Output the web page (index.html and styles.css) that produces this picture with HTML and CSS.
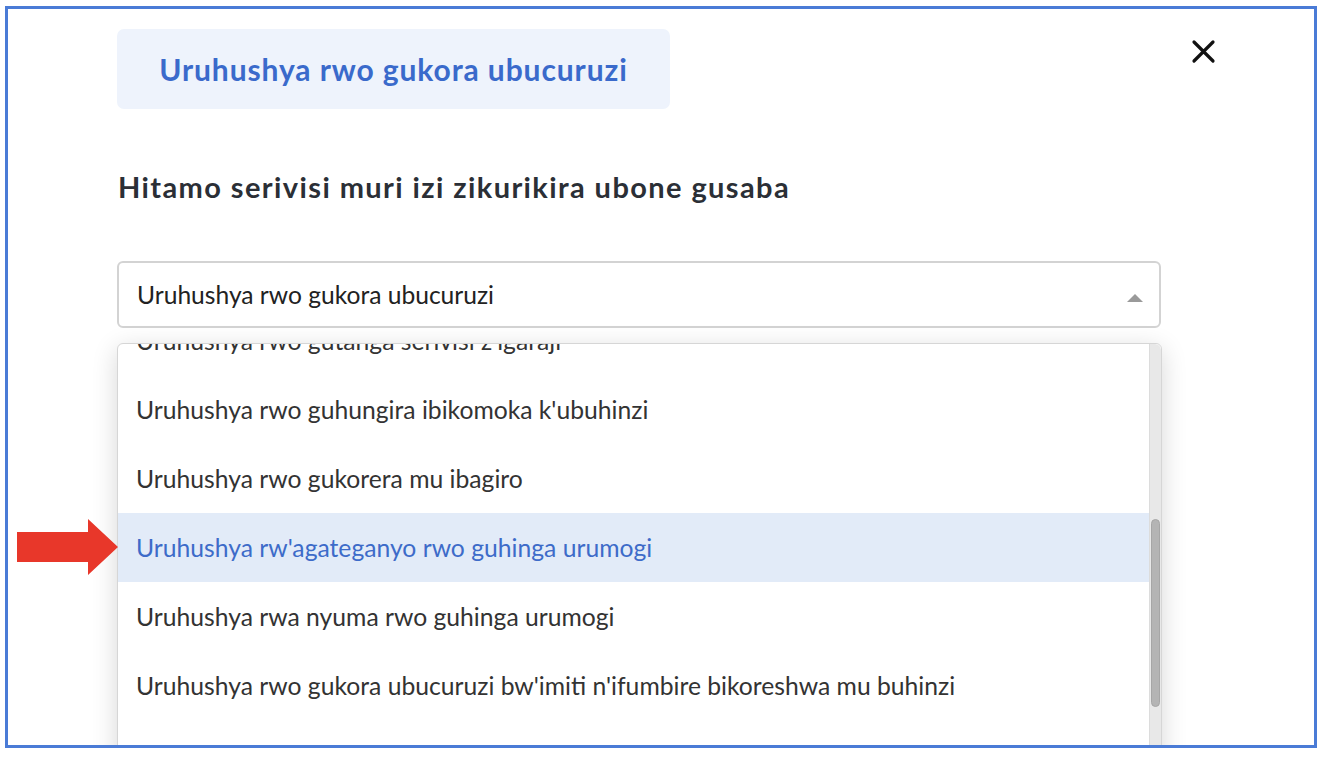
FILE: index.html
```html
<!DOCTYPE html>
<html lang="rw">
<head>
<meta charset="utf-8">
<title>Uruhushya rwo gukora ubucuruzi</title>
<link rel="stylesheet" href="styles.css">
</head>
<body>
<div class="frame">
  <header class="top">
    <div class="badge">Uruhushya rwo gukora ubucuruzi</div>
    <button class="close" aria-label="Funga">
      <svg width="25" height="25" viewBox="0 0 25 25" aria-hidden="true">
        <path d="M3 3 L22 22 M22 3 L3 22" stroke="#111" stroke-width="3.2" stroke-linecap="round" fill="none"/>
      </svg>
    </button>
  </header>
  <main class="content">
    <h2 class="prompt">Hitamo serivisi muri izi zikurikira ubone gusaba</h2>
    <div class="select">
      <span class="select-value">Uruhushya rwo gukora ubucuruzi</span>
      <span class="caret"></span>
    </div>
    <div class="dropdown">
      <div class="viewport">
        <ul class="options">
          <li class="option">Uruhushya rwo gutanga serivisi z'igaraji</li>
          <li class="option">Uruhushya rwo guhungira ibikomoka k'ubuhinzi</li>
          <li class="option">Uruhushya rwo gukorera mu ibagiro</li>
          <li class="option active">Uruhushya rw'agateganyo rwo guhinga urumogi</li>
          <li class="option">Uruhushya rwa nyuma rwo guhinga urumogi</li>
          <li class="option">Uruhushya rwo gukora ubucuruzi bw'imiti n'ifumbire bikoreshwa mu buhinzi</li>
          <li class="option">Uruhushya rwo gutunganya ibikomoka ku buhinzi</li>
        </ul>
      </div>
      <div class="scrollbar"><div class="thumb"></div></div>
    </div>
  </main>
  <svg class="pointer" width="101" height="56" viewBox="0 0 101 56" aria-hidden="true">
    <polygon points="0,13 71,13 71,0 101,28 71,56 71,43 0,43" fill="#e8372a"/>
  </svg>
</div>
</body>
</html>
```

FILE: styles.css
```css
* { box-sizing: border-box; }

html, body {
  margin: 0;
  padding: 0;
  background: #ffffff;
}

body {
  font-family: Lato, "Noto Sans", "Liberation Sans", sans-serif;
  color: #333;
}

.frame {
  position: relative;
  margin: 6px 0 0 5px;
  width: 1312px;
  height: 742px;
  border: 3px solid #4a7bd6;
  overflow: hidden;
  padding: 20px 98px 0 109px;
  background: #fff;
}

.top {
  display: flex;
  justify-content: space-between;
  align-items: flex-start;
}

.badge {
  width: 553px;
  height: 80px;
  display: flex;
  align-items: center;
  justify-content: center;
  background: #eef3fc;
  border-radius: 7px;
  color: #3a6acb;
  font-weight: 700;
  font-size: 30px;
  letter-spacing: 0.9px;
}

.close {
  margin-top: 10px;
  padding: 0;
  border: 0;
  background: none;
  width: 25px;
  height: 25px;
  display: block;
}
.close svg { display: block; }

.content {
  width: 1045px;
  display: flex;
  flex-direction: column;
}

.prompt {
  margin: 60px 0 0 1px;
  font-size: 29px;
  line-height: 36px;
  font-weight: 700;
  letter-spacing: 1.4px;
  color: #2b2f36;
}

.select {
  margin-top: 56px;
  height: 67px;
  width: 1044px;
  border: 2px solid #d3d3d3;
  border-radius: 6px;
  display: flex;
  align-items: center;
  justify-content: space-between;
  padding: 0 16px 0 18px;
}

.select-value {
  font-size: 24.6px;
  color: #222;
}

.caret {
  width: 0;
  height: 0;
  border-left: 8px solid transparent;
  border-right: 8px solid transparent;
  border-bottom: 8px solid #9a9a9a;
  margin-top: 7px;
}

.dropdown {
  margin-top: 15px;
  width: 1045px;
  height: 420px;
  border: 1px solid #d6d6d6;
  border-radius: 6px 6px 0 0;
  box-shadow: 0 6px 26px rgba(0, 0, 0, 0.16);
  display: flex;
  overflow: hidden;
  background: #fff;
}

.viewport {
  flex: 1;
  overflow: hidden;
}

.options {
  list-style: none;
  margin: -38px 0 0 0;
  padding: 0;
}

.option {
  height: 69px;
  display: flex;
  align-items: center;
  padding-left: 18px;
  font-size: 24.7px;
  color: #333;
  white-space: nowrap;
}

.option.active {
  background: #e2ebf8;
  color: #3d6bc9;
}

.scrollbar {
  width: 12px;
  background: #e8e8e8;
  border-left: 1px solid #dcdcdc;
  border-top-right-radius: 6px;
}

.thumb {
  margin: 175px 0 0 1px;
  width: 9px;
  height: 188px;
  background: #b4b4b4;
  border: 1px solid #a6a6a6;
  border-radius: 5px;
}

.pointer {
  position: absolute;
  left: 9px;
  top: 510px;
  display: block;
}
```
